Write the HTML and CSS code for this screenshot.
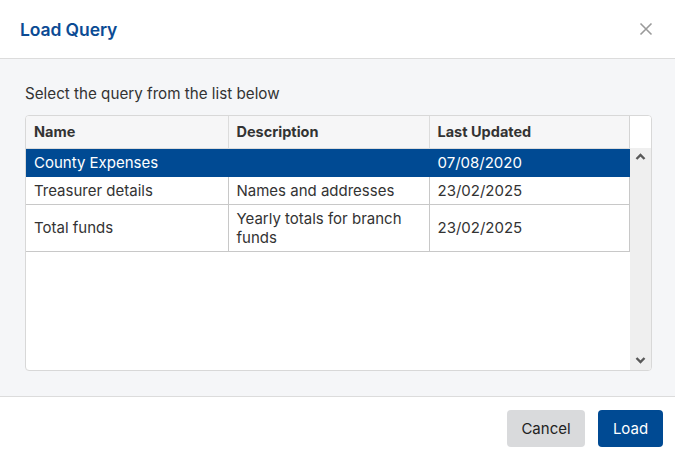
FILE: index.html
```html
<!DOCTYPE html>
<html lang="en">
<head>
  <meta charset="UTF-8">
  <title>Load Query</title>
  <link rel="stylesheet" href="styles.css">
</head>
<body>

<div class="dialog">
  <div class="dialog-header">
    <h1>Load Query</h1>
    <button class="close" aria-label="Close">
      <svg width="14" height="14" viewBox="0 0 14 14"><path d="M1.5 1.5 L12.5 12.5 M12.5 1.5 L1.5 12.5" stroke="#9a9a9a" stroke-width="1.6" fill="none"/></svg>
    </button>
  </div>

  <div class="dialog-body">
    <p class="hint">Select the query from the list below</p>

    <div class="grid">
      <div class="grid-main">
        <table>
          <thead>
            <tr>
              <th class="col-name">Name</th>
              <th class="col-desc">Description</th>
              <th class="col-date">Last Updated</th>
            </tr>
          </thead>
          <tbody>
            <tr class="selected">
              <td>County Expenses</td>
              <td></td>
              <td>07/08/2020</td>
            </tr>
            <tr>
              <td>Treasurer details</td>
              <td>Names and addresses</td>
              <td>23/02/2025</td>
            </tr>
            <tr>
              <td>Total funds</td>
              <td>Yearly totals for branch funds</td>
              <td>23/02/2025</td>
            </tr>
          </tbody>
        </table>
      </div>
      <div class="grid-scroll">
        <div class="scroll-head"></div>
        <div class="scroll-track">
          <svg width="11" height="8" viewBox="0 0 11 8"><path d="M1.5 6 L5.5 2 L9.5 6" stroke="#595959" stroke-width="2.4" fill="none"/></svg>
          <svg width="11" height="8" viewBox="0 0 11 8"><path d="M1.5 2 L5.5 6 L9.5 2" stroke="#595959" stroke-width="2.4" fill="none"/></svg>
        </div>
      </div>
    </div>
  </div>

  <div class="dialog-footer">
    <button class="btn btn-cancel">Cancel</button>
    <button class="btn btn-primary">Load</button>
  </div>
</div>

</body>
</html>
```

FILE: styles.css
```css
body {
  margin: 0;
  font-family: Inter, "Noto Sans", Arial, sans-serif;
  background: white;
  color: #333;
}
.dialog {
  width: 675px;
  height: 460px;
  display: flex;
  flex-direction: column;
}
.dialog-header {
  height: 58px;
  display: flex;
  align-items: center;
  justify-content: space-between;
  padding: 0 22px 0 20px;
  border-bottom: 1px solid #dcdcdc;
  background: white;
}
.dialog-header h1 {
  margin: 0;
  font-size: 17.5px;
  font-weight: 600;
  color: #0b4b94;
  letter-spacing: -0.1px;
}
.close {
  border: none;
  background: none;
  padding: 0;
  width: 14px;
  height: 14px;
  cursor: pointer;
  display: flex;
}
.dialog-body {
  flex: 1;
  background: #f5f6f8;
  padding: 26px 23px 24px 25px;
  display: flex;
  flex-direction: column;
}
.hint {
  margin: 0 0 12px;
  font-size: 15.2px;
  line-height: 18px;
  color: #333;
}
.grid {
  height: 256px;
  box-sizing: border-box;
  border: 1px solid #d8d8d8;
  border-radius: 4px;
  background: white;
  display: flex;
  overflow: hidden;
}
.grid-main {
  flex: 1;
}
table {
  width: 100%;
  border-collapse: collapse;
  table-layout: fixed;
  font-size: 15px;
}
th {
  box-sizing: border-box;
  height: 32px;
  text-align: left;
  font-size: 14.5px;
  font-weight: 700;
  color: #333;
  background: #f6f6f7;
  padding: 0 8px;
  border-right: 1px solid #dcdcdc;
  border-bottom: 1px solid #dcdcdc;
}
th.col-date {
  border-right: 1px solid #d4d4d4;
}
.col-name { width: 202px; }
.col-desc { width: 201px; }
td {
  height: 19px;
  padding: 4px 7px 4px 8px;
  line-height: 19px;
  color: #333;
  border-right: 1px solid #c8c8c8;
  border-bottom: 1px solid #c8c8c8;
  vertical-align: middle;
}
tr.selected td {
  background: #004a93;
  color: white;
  border-right-color: #004a93;
  border-bottom-color: #004a93;
}
.grid-scroll {
  width: 21px;
  display: flex;
  flex-direction: column;
}
.scroll-head {
  height: 32px;
  background: white;
}
.scroll-track {
  flex: 1;
  background: #efefef;
  display: flex;
  flex-direction: column;
  justify-content: space-between;
  align-items: center;
  padding: 5px 0 6px;
}
.dialog-footer {
  height: 64px;
  box-sizing: border-box;
  border-top: 1px solid #dcdcdc;
  display: flex;
  justify-content: flex-end;
  align-items: flex-start;
  gap: 13px;
  padding: 13px 12px 0 0;
}
.btn {
  height: 37px;
  border: none;
  border-radius: 4px;
  font-family: inherit;
  font-size: 15px;
  cursor: pointer;
}
.btn-cancel {
  width: 78px;
  background: #d9dadc;
  color: #222;
}
.btn-primary {
  width: 65px;
  background: #004a93;
  color: white;
}
```
